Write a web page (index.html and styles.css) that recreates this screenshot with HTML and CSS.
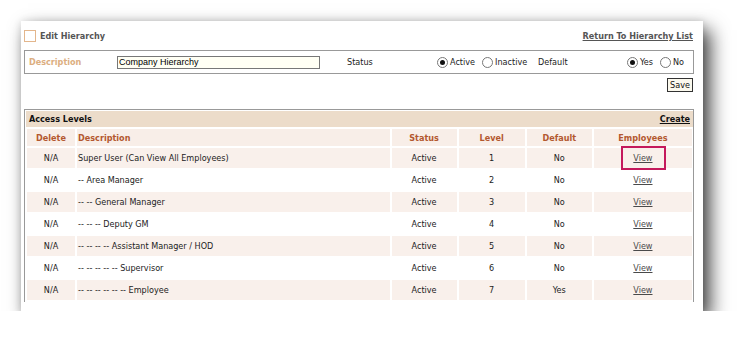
FILE: index.html
```html
<!DOCTYPE html>
<html lang="en">
<head>
    <meta charset="UTF-8">
    <title>Edit Hierarchy</title>
    <link rel="stylesheet" href="styles.css">
</head>
<body>
    <div class="panel">
        <div class="title-row">
            <div class="title">
                <span class="title-box"></span>
                <span>Edit Hierarchy</span>
            </div>
            <a href="#" class="link-back">Return To Hierarchy List</a>
        </div>

        <div class="form-box">
            <label class="form-label">Description</label>
            <input type="text" class="text-input" value="Company Hierarchy">
            <span class="field-name status-name">Status</span>
            <div class="radio-group status-group">
                <input type="radio" name="status" checked><span>Active</span>
                <input type="radio" name="status"><span>Inactive</span>
            </div>
            <span class="field-name default-name">Default</span>
            <div class="radio-group">
                <input type="radio" name="default" checked><span>Yes</span>
                <input type="radio" name="default"><span>No</span>
            </div>
        </div>

        <div class="save-row">
            <button class="save-button">Save</button>
        </div>

        <div class="levels">
            <div class="levels-head">
                <span>Access Levels</span>
                <a href="#" class="link-create">Create</a>
            </div>
            <table class="levels-table">
                <thead>
                    <tr>
                        <th class="col-delete">Delete</th>
                        <th class="col-desc">Description</th>
                        <th class="col-status">Status</th>
                        <th class="col-level">Level</th>
                        <th class="col-default">Default</th>
                        <th class="col-emp">Employees</th>
                    </tr>
                </thead>
                <tbody>
                    <tr>
                        <td>N/A</td>
                        <td class="desc">Super User (Can View All Employees)</td>
                        <td>Active</td>
                        <td>1</td>
                        <td>No</td>
                        <td><a href="#" class="view marked">View</a></td>
                    </tr>
                    <tr>
                        <td>N/A</td>
                        <td class="desc">-- Area Manager</td>
                        <td>Active</td>
                        <td>2</td>
                        <td>No</td>
                        <td><a href="#" class="view">View</a></td>
                    </tr>
                    <tr>
                        <td>N/A</td>
                        <td class="desc">-- -- General Manager</td>
                        <td>Active</td>
                        <td>3</td>
                        <td>No</td>
                        <td><a href="#" class="view">View</a></td>
                    </tr>
                    <tr>
                        <td>N/A</td>
                        <td class="desc">-- -- -- Deputy GM</td>
                        <td>Active</td>
                        <td>4</td>
                        <td>No</td>
                        <td><a href="#" class="view">View</a></td>
                    </tr>
                    <tr>
                        <td>N/A</td>
                        <td class="desc">-- -- -- -- Assistant Manager / HOD</td>
                        <td>Active</td>
                        <td>5</td>
                        <td>No</td>
                        <td><a href="#" class="view">View</a></td>
                    </tr>
                    <tr>
                        <td>N/A</td>
                        <td class="desc">-- -- -- -- -- Supervisor</td>
                        <td>Active</td>
                        <td>6</td>
                        <td>No</td>
                        <td><a href="#" class="view">View</a></td>
                    </tr>
                    <tr>
                        <td>N/A</td>
                        <td class="desc">-- -- -- -- -- -- Employee</td>
                        <td>Active</td>
                        <td>7</td>
                        <td>Yes</td>
                        <td><a href="#" class="view">View</a></td>
                    </tr>
                </tbody>
            </table>
        </div>
    </div>
</body>
</html>
```

FILE: styles.css
```css
body {
    margin: 0;
    background-color: #fff;
    font-family: "DejaVu Sans Condensed", "DejaVu Sans", sans-serif;
    font-size: 9px;
    color: #222;
}
.panel {
    margin: 21px 0 0 21px;
    width: 670px;
    height: 281px;
    padding: 9px 9px 0 3px;
    background-color: #fff;
    overflow: hidden;
    box-shadow: 7px 9px 18px rgba(0, 0, 0, 0.75), 0 0 8px rgba(0, 0, 0, 0.12);
}
.title-row {
    display: flex;
    justify-content: space-between;
    align-items: center;
    height: 12px;
}
.title {
    display: flex;
    align-items: center;
    gap: 4px;
    font-weight: bold;
    color: #555;
}
.title-box {
    width: 10px;
    height: 10px;
    border: 1px solid #e3b68c;
}
.link-back {
    color: #555;
    font-weight: bold;
    padding-right: 1px;
}
.form-box {
    display: flex;
    align-items: center;
    margin-top: 8px;
    height: 22px;
    border: 1px solid #999;
}
.form-label {
    width: 88px;
    padding-left: 4px;
    color: #dcae80;
    font-weight: bold;
}
.text-input {
    width: 199px;
    height: 11px;
    margin: 0;
    padding: 0 1px;
    border: 1px solid #777;
    background-color: #fffff4;
    font-family: "Liberation Sans", Arial, sans-serif;
    font-size: 9px;
    color: #000;
}
.field-name {
    flex: none;
}
.status-name {
    margin-left: 27px;
    width: 90px;
}
.default-name {
    width: 89px;
}
.radio-group {
    display: flex;
    align-items: center;
}
.status-group {
    width: 101px;
}
.radio-group input {
    appearance: none;
    width: 11px;
    height: 11px;
    margin: 0 2px 0 0;
    border: 1px solid #777;
    border-radius: 50%;
    background-color: #fff;
    display: flex;
    align-items: center;
    justify-content: center;
}
.radio-group input:checked::after {
    content: "";
    width: 5px;
    height: 5px;
    border-radius: 50%;
    background-color: #111;
}
.radio-group span {
    margin-right: 7px;
}
.save-row {
    display: flex;
    justify-content: flex-end;
    margin-top: 4px;
}
.save-button {
    height: 14px;
    margin-right: 1px;
    padding: 0 2px;
    border: 1px solid #333;
    background-color: #fbf9ee;
    font-family: inherit;
    font-size: 9px;
    color: #111;
    line-height: 12px;
}
.levels {
    margin-top: 17px;
    border: 1px solid #999;
    border-bottom: none;
    padding: 1px 0 0 1px;
}
.levels-head {
    display: flex;
    justify-content: space-between;
    align-items: center;
    height: 16px;
    padding: 0 3px;
    background-color: #ecdcca;
    font-weight: bold;
    color: #111;
}
.link-create {
    color: #111;
}
.levels-table {
    width: 669px;
    border-spacing: 2px;
    margin-left: -1px;
}
.levels-table th {
    height: 17px;
    padding: 0;
    background-color: #f8eee8;
    color: #b3582f;
    font-weight: bold;
    text-align: center;
}
.levels-table th.col-desc {
    text-align: left;
    padding-left: 1px;
}
.levels-table td {
    height: 20px;
    padding: 0;
    text-align: center;
}
.levels-table td.desc {
    text-align: left;
    padding-left: 1px;
}
.levels-table tbody tr:nth-child(odd) td {
    background-color: #f9f0eb;
}
.col-delete { width: 48px; }
.col-desc { width: 311px; }
.col-status { width: 65px; }
.col-level { width: 66px; }
.col-default { width: 65px; }
.col-emp { width: 98px; }
.view {
    color: #4a4a4a;
}
.marked {
    position: relative;
}
.marked::after {
    content: "";
    position: absolute;
    left: -12px;
    right: -13px;
    top: -7px;
    bottom: -7px;
    border: 2px solid #c4195c;
}
```
